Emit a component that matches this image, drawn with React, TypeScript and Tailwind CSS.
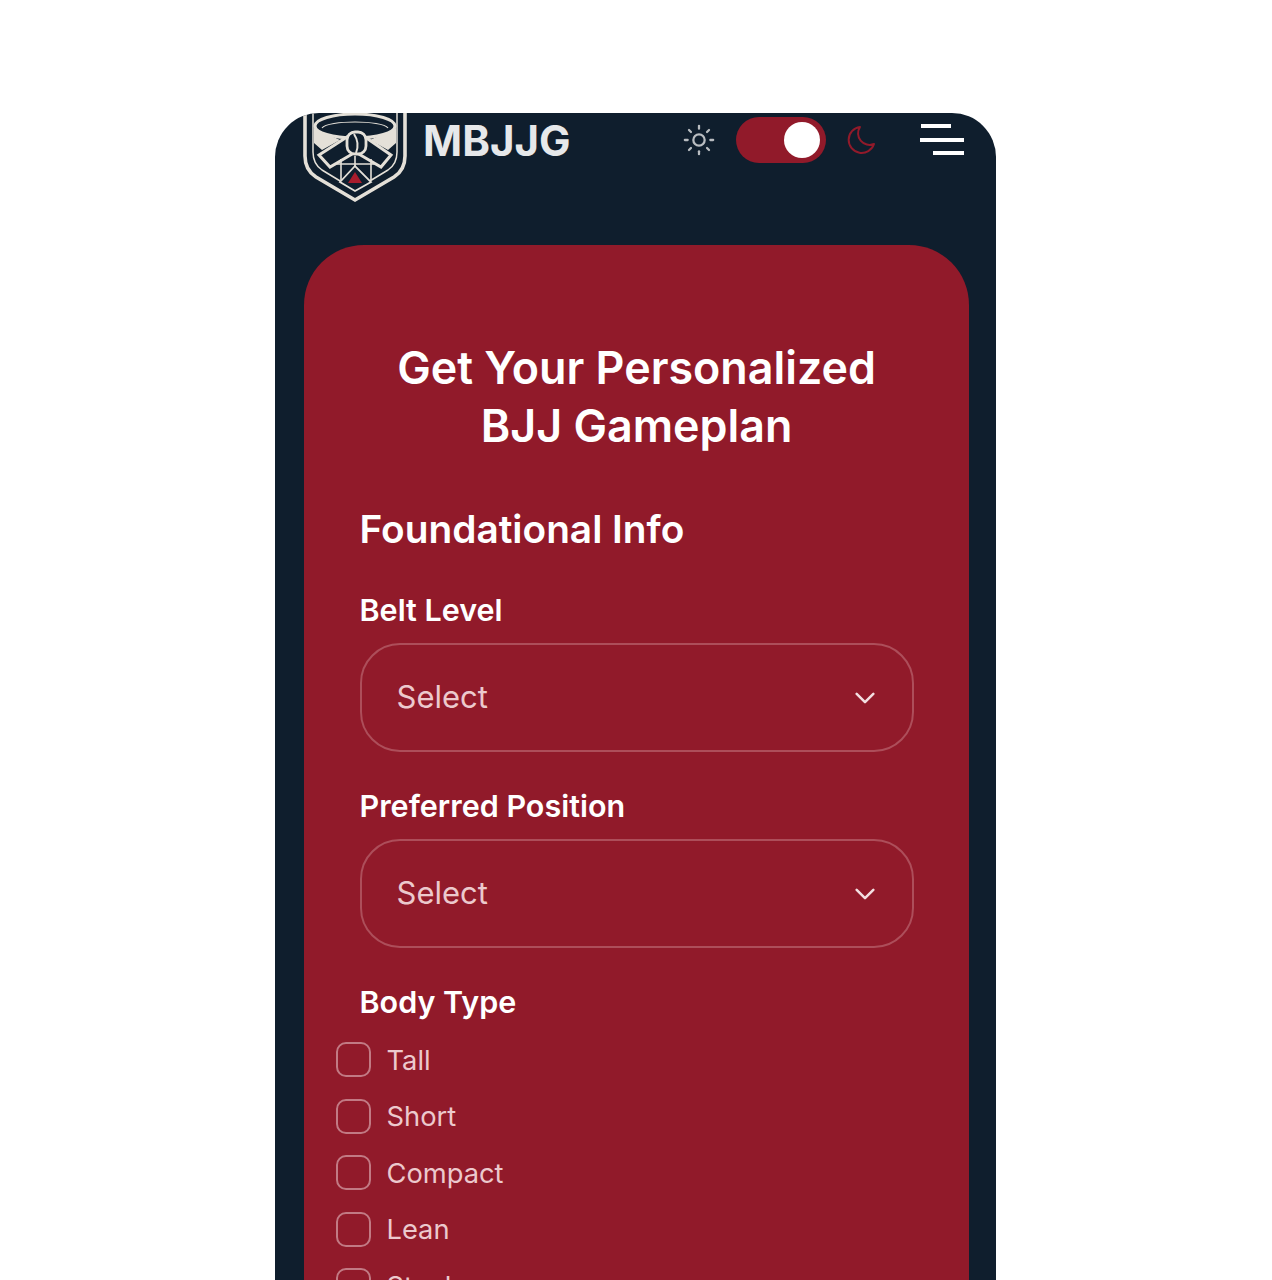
import { Sun } from "lucide-react";

const SANS = "font-['Inter','Liberation_Sans',sans-serif]";

function Logo() {
  return (
    <svg viewBox="303 113 106 92" className="w-[106px] h-[92px] shrink-0" fill="none">
      <path d="M305 113V156Q305 170 316 177L355 200L394 177Q405 170 405 156V113" stroke="#e4e0d8" strokeWidth="3.6" />
      <path d="M313 113V152Q313 164 322 170L355 190L388 170Q397 164 397 152V113" stroke="#e4e0d8" strokeWidth="1.5" />
      <path d="M314 128L340 140L322 150L314 143ZM396 128L370 140L388 150L396 143Z" fill="#e4e0d8" />
      <ellipse cx="355" cy="126" rx="40" ry="12" fill="#0f1e2d" stroke="#e4e0d8" strokeWidth="3" />
      <path d="M322 128C328 120 382 120 388 128" stroke="#e4e0d8" strokeWidth="1.2" />
      <path d="M319 155L347 137L354 153L330 167Z" fill="#0f1e2d" stroke="#e4e0d8" strokeWidth="3" />
      <path d="M391 155L365 137L357 153L381 167Z" fill="#0f1e2d" stroke="#e4e0d8" strokeWidth="3" />
      <rect x="347" y="132" width="19" height="22" rx="8" fill="#0f1e2d" stroke="#e4e0d8" strokeWidth="2.8" />
      <path d="M354 134Q360 143 356 153" stroke="#e4e0d8" strokeWidth="2" />
      <path d="M336 164H375M341 159V180M355 156V166M371 159V180" stroke="#e4e0d8" strokeWidth="1.6" />
      <path d="M340 182L355 166L371 182L355 191Z" fill="#0f1e2d" stroke="#e4e0d8" strokeWidth="1.8" />
      <path d="M355 172L362 183H348Z" fill="#a81c2c" />
    </svg>
  );
}

function SelectField({ label }: { label: string }) {
  return (
    <div className="flex flex-col">
      <div className="text-[30.5px] leading-[36px] font-semibold text-white">{label}</div>
      <div className="mt-[15px] h-[109px] rounded-[40px] border-2 border-[#ad4e5a] pl-[35px] pr-[37px] flex items-center justify-between">
        <span className="text-[31px] text-[#ecc9cd]">Select</span>
        <svg viewBox="0 0 24 14" className="w-[20px] h-[12px]" fill="none">
          <path d="M2 2L12 12L22 2" stroke="#f3dfe1" strokeWidth="3" strokeLinecap="round" strokeLinejoin="round" />
        </svg>
      </div>
    </div>
  );
}

function Check({ label }: { label: string }) {
  return (
    <div className="flex items-center gap-[15.5px] h-[35px]">
      <div className="w-[35px] h-[35px] rounded-[10px] border-2 border-[#c27a84] shrink-0" />
      <span className="pt-[3px] text-[27.3px] text-[#ecc9cd]">{label}</span>
    </div>
  );
}

export default function App() {
  return (
    <div className={`h-[1280px] overflow-hidden bg-white pt-[113px] pl-[275px] ${SANS}`}>
      <div className="w-[721px] h-[1167px] overflow-hidden rounded-t-[44px] bg-[#0f1e2d]">
        <header className="h-[132px] pl-[28px] pr-[32px] flex items-start">
          <Logo />
          <div className="ml-[14px] mt-[5px] text-[42px] leading-[46px] font-bold text-[#e6e8ea]">MBJJG</div>
          <div className="ml-auto mt-[4px] flex items-center">
            <Sun size={34} strokeWidth={1.6} className="text-[#b9bdc1]" />
            <div className="ml-[20px] w-[90px] h-[46px] rounded-full bg-[#911a2a] flex items-center justify-end pr-[6px]">
              <div className="w-[36px] h-[36px] rounded-full bg-white" />
            </div>
            <svg viewBox="0 0 32 32" className="ml-[19px] w-[32px] h-[32px]" fill="none">
              <path d="M15 3A13 13 0 1 0 29 20A11.5 11.5 0 0 1 15 3Z" stroke="#911a2a" strokeWidth="2" strokeLinejoin="round" />
            </svg>
            <svg viewBox="0 0 44 32" className="ml-[43px] w-[44px] h-[32px]" fill="none">
              <path d="M1 2H31M0 16H44M13 29H44" stroke="#fff" strokeWidth="4" />
            </svg>
          </div>
        </header>
        <main className="ml-[29px] w-[665px] h-[1100px] rounded-t-[60px] bg-[#911a2a] pt-[94px]">
          <h1 className="text-center text-[44.8px] leading-[58px] font-semibold text-white">
            Get Your Personalized
            <br />
            BJJ Gameplan
          </h1>
          <div className="mt-[51px] px-[55.5px]">
            <h2 className="text-[38.8px] leading-[46px] font-semibold text-white">Foundational Info</h2>
            <div className="mt-[40px] flex flex-col gap-[36px]">
              <SelectField label="Belt Level" />
              <SelectField label="Preferred Position" />
            </div>
            <div className="mt-[36px] text-[30.5px] leading-[36px] font-semibold text-white">Body Type</div>
          </div>
          <div className="mt-[22px] pl-[32px] flex flex-col gap-[21.5px]">
            <Check label="Tall" />
            <Check label="Short" />
            <Check label="Compact" />
            <Check label="Lean" />
            <Check label="Stocky" />
          </div>
        </main>
      </div>
    </div>
  );
}
